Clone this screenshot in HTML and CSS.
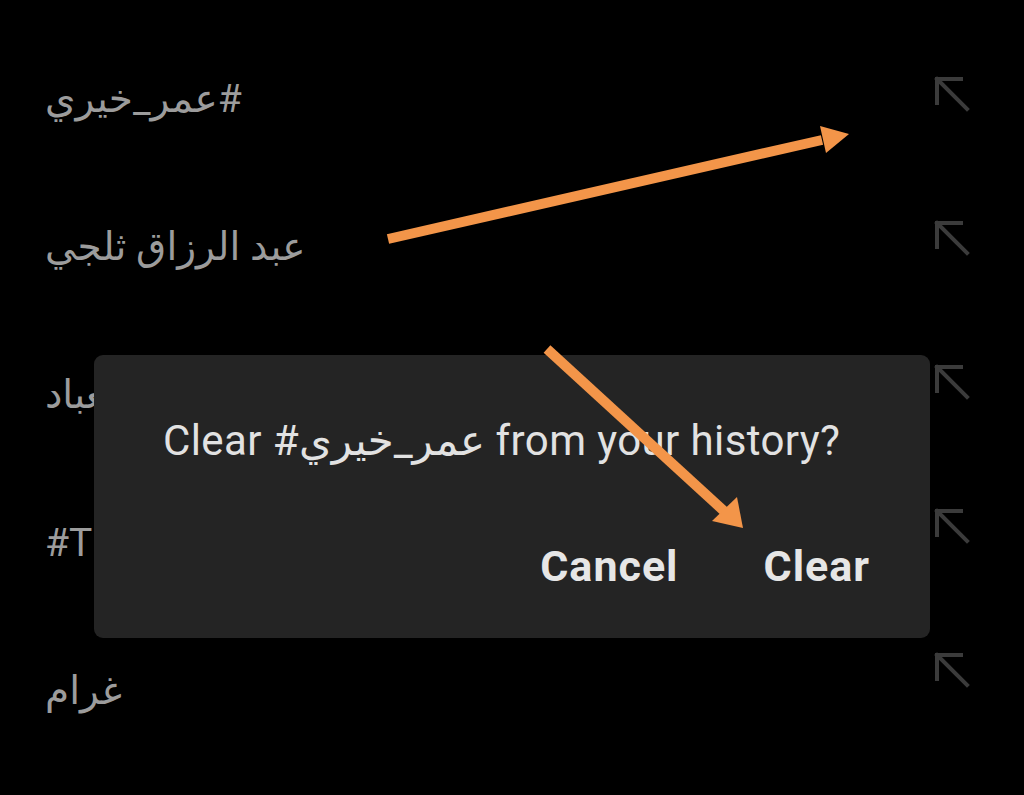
FILE: index.html
```html
<!DOCTYPE html>
<html lang="ar">
<head>
<meta charset="utf-8">
<title>Search history</title>
<link rel="stylesheet" href="styles.css">
</head>
<body>
<div class="screen">
  <div class="history">
    <ul class="terms">
      <li class="term-row"><span class="term" dir="rtl">#عمر_خيري</span></li>
      <li class="term-row"><span class="term" dir="rtl">عبد الرزاق ثلجي</span></li>
      <li class="term-row"><span class="term" dir="rtl">حمد العباد</span></li>
      <li class="term-row"><span class="term" dir="ltr">#TheVoice</span></li>
      <li class="term-row"><span class="term" dir="rtl">غرام</span></li>
    </ul>
    <ul class="fills">
      <li class="fill-row"><svg class="fill-icon" viewBox="0 0 36 36"><path d="M3 27V3h24M3 3l30 30"/></svg></li>
      <li class="fill-row"><svg class="fill-icon" viewBox="0 0 36 36"><path d="M3 27V3h24M3 3l30 30"/></svg></li>
      <li class="fill-row"><svg class="fill-icon" viewBox="0 0 36 36"><path d="M3 27V3h24M3 3l30 30"/></svg></li>
      <li class="fill-row"><svg class="fill-icon" viewBox="0 0 36 36"><path d="M3 27V3h24M3 3l30 30"/></svg></li>
      <li class="fill-row"><svg class="fill-icon" viewBox="0 0 36 36"><path d="M3 27V3h24M3 3l30 30"/></svg></li>
    </ul>
  </div>

  <div class="dialog" role="dialog">
    <p class="dialog-text">Clear #عمر_خيري from your history?</p>
    <div class="dialog-actions">
      <button class="btn">Cancel</button>
      <button class="btn">Clear</button>
    </div>
  </div>

  <svg class="annotations" viewBox="0 0 1024 795" width="1024" height="795">
    <g fill="#f39549">
      <line x1="388" y1="239" x2="822" y2="140" stroke="#f39549" stroke-width="10"/>
      <polygon points="849,134 820,126 826,153"/>
      <line x1="547" y1="349" x2="725" y2="512" stroke="#f39549" stroke-width="10"/>
      <polygon points="743,528 737,497 712,521"/>
    </g>
  </svg>
</div>
</body>
</html>
```
FILE: styles.css
```css
* { box-sizing: border-box; }
html, body {
  margin: 0;
  padding: 0;
  background: #000;
}
.screen {
  position: relative;
  width: 1024px;
  height: 795px;
  overflow: hidden;
  font-family: "Roboto", "DejaVu Sans", sans-serif;
}
.history {
  display: flex;
  justify-content: space-between;
  padding: 0 54px 0 45px;
}
.terms, .fills {
  list-style: none;
  margin: 0;
  padding: 0;
  display: flex;
  flex-direction: column;
}
.terms {
  padding-top: 25px;
}
.term-row {
  height: 148px;
  display: flex;
  align-items: center;
}
.term {
  color: #9c9c9c;
  font-size: 39px;
  line-height: 1;
  white-space: nowrap;
}
.fills {
  padding-top: 25px;
}
.fill-row {
  height: 144px;
  display: flex;
  align-items: center;
}
.fill-icon {
  width: 36px;
  height: 36px;
  margin-top: -6px;
  fill: none;
  stroke: #3b3b3b;
  stroke-width: 4;
  stroke-linecap: square;
}
.dialog {
  position: absolute;
  left: 94px;
  top: 355px;
  width: 836px;
  height: 283px;
  background: #242424;
  border-radius: 9px;
  padding: 62px 60px 0 69px;
  display: flex;
  flex-direction: column;
}
.dialog-text {
  margin: 0;
  color: #e2e2e2;
  font-size: 42px;
  letter-spacing: 0.4px;
  line-height: 48px;
  white-space: nowrap;
}
.dialog-actions {
  margin-top: 77px;
  display: flex;
  justify-content: flex-end;
  gap: 85px;
}
.btn {
  background: none;
  border: 0;
  padding: 0;
  color: #e6e6e6;
  font-family: inherit;
  font-size: 43px;
  font-weight: 700;
  letter-spacing: 1px;
  line-height: 48px;
}
.annotations {
  position: absolute;
  left: 0;
  top: 0;
  pointer-events: none;
}
```
